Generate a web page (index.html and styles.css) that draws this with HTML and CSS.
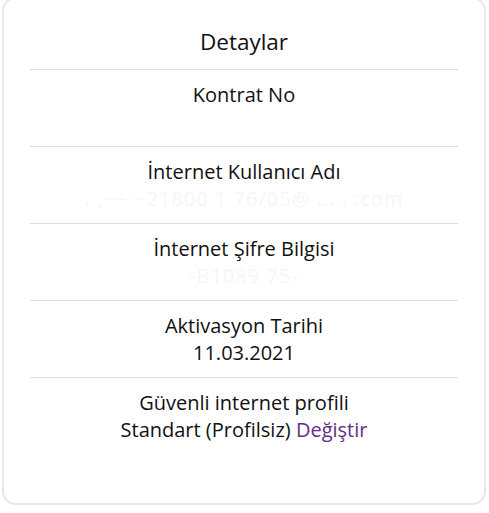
FILE: index.html
```html
<!DOCTYPE html>
<html lang="tr">
<head>
<meta charset="utf-8">
<link rel="stylesheet" href="styles.css">
</head>
<body>
<div class="card">
  <h2 class="title">Detaylar</h2>
  <div class="row">
    <div class="label">Kontrat No</div>
    <div class="value"></div>
  </div>
  <div class="row">
    <div class="label">İnternet Kullanıcı Adı</div>
    <div class="value masked">.  ,~~  ~21800 1 76/05@ ... .  :com</div>
  </div>
  <div class="row">
    <div class="label">İnternet Şifre Bilgisi</div>
    <div class="value masked">-B1089    75-</div>
  </div>
  <div class="row">
    <div class="label">Aktivasyon Tarihi</div>
    <div class="value">11.03.2021</div>
  </div>
  <div class="row last">
    <div class="label">Güvenli internet profili</div>
    <div class="value">Standart (Profilsiz) <a class="link" href="#">Değiştir</a></div>
  </div>
</div>
</body>
</html>
```
FILE: styles.css
```css
html, body {
  margin: 0;
  padding: 0;
  background: #fff;
}
body {
  font-family: "Open Sans", "Noto Sans", sans-serif;
  color: #111;
  padding: 0 3px 0 2px;
}
.card {
  margin-top: -3px;
  height: 508px;
  box-sizing: border-box;
  border: 2px solid #e8e8e8;
  border-radius: 14px;
  padding: 28px 26px 0 26px;
}
.title {
  margin: 0;
  font-size: 22.5px;
  font-weight: 400;
  text-align: center;
  line-height: 30px;
  padding-bottom: 12px;
  border-bottom: 1px solid #dedede;
}
.row {
  text-align: center;
  padding: 11px 0 11px;
  border-bottom: 1px solid #dedede;
}
.row.last {
  border-bottom: none;
}
.label, .value {
  font-size: 20px;
  line-height: 27px;
  min-height: 27px;
}
.masked {
  color: #f6f6f6;
  letter-spacing: 1px;
}
.link {
  color: #652d86;
  text-decoration: none;
}
```
